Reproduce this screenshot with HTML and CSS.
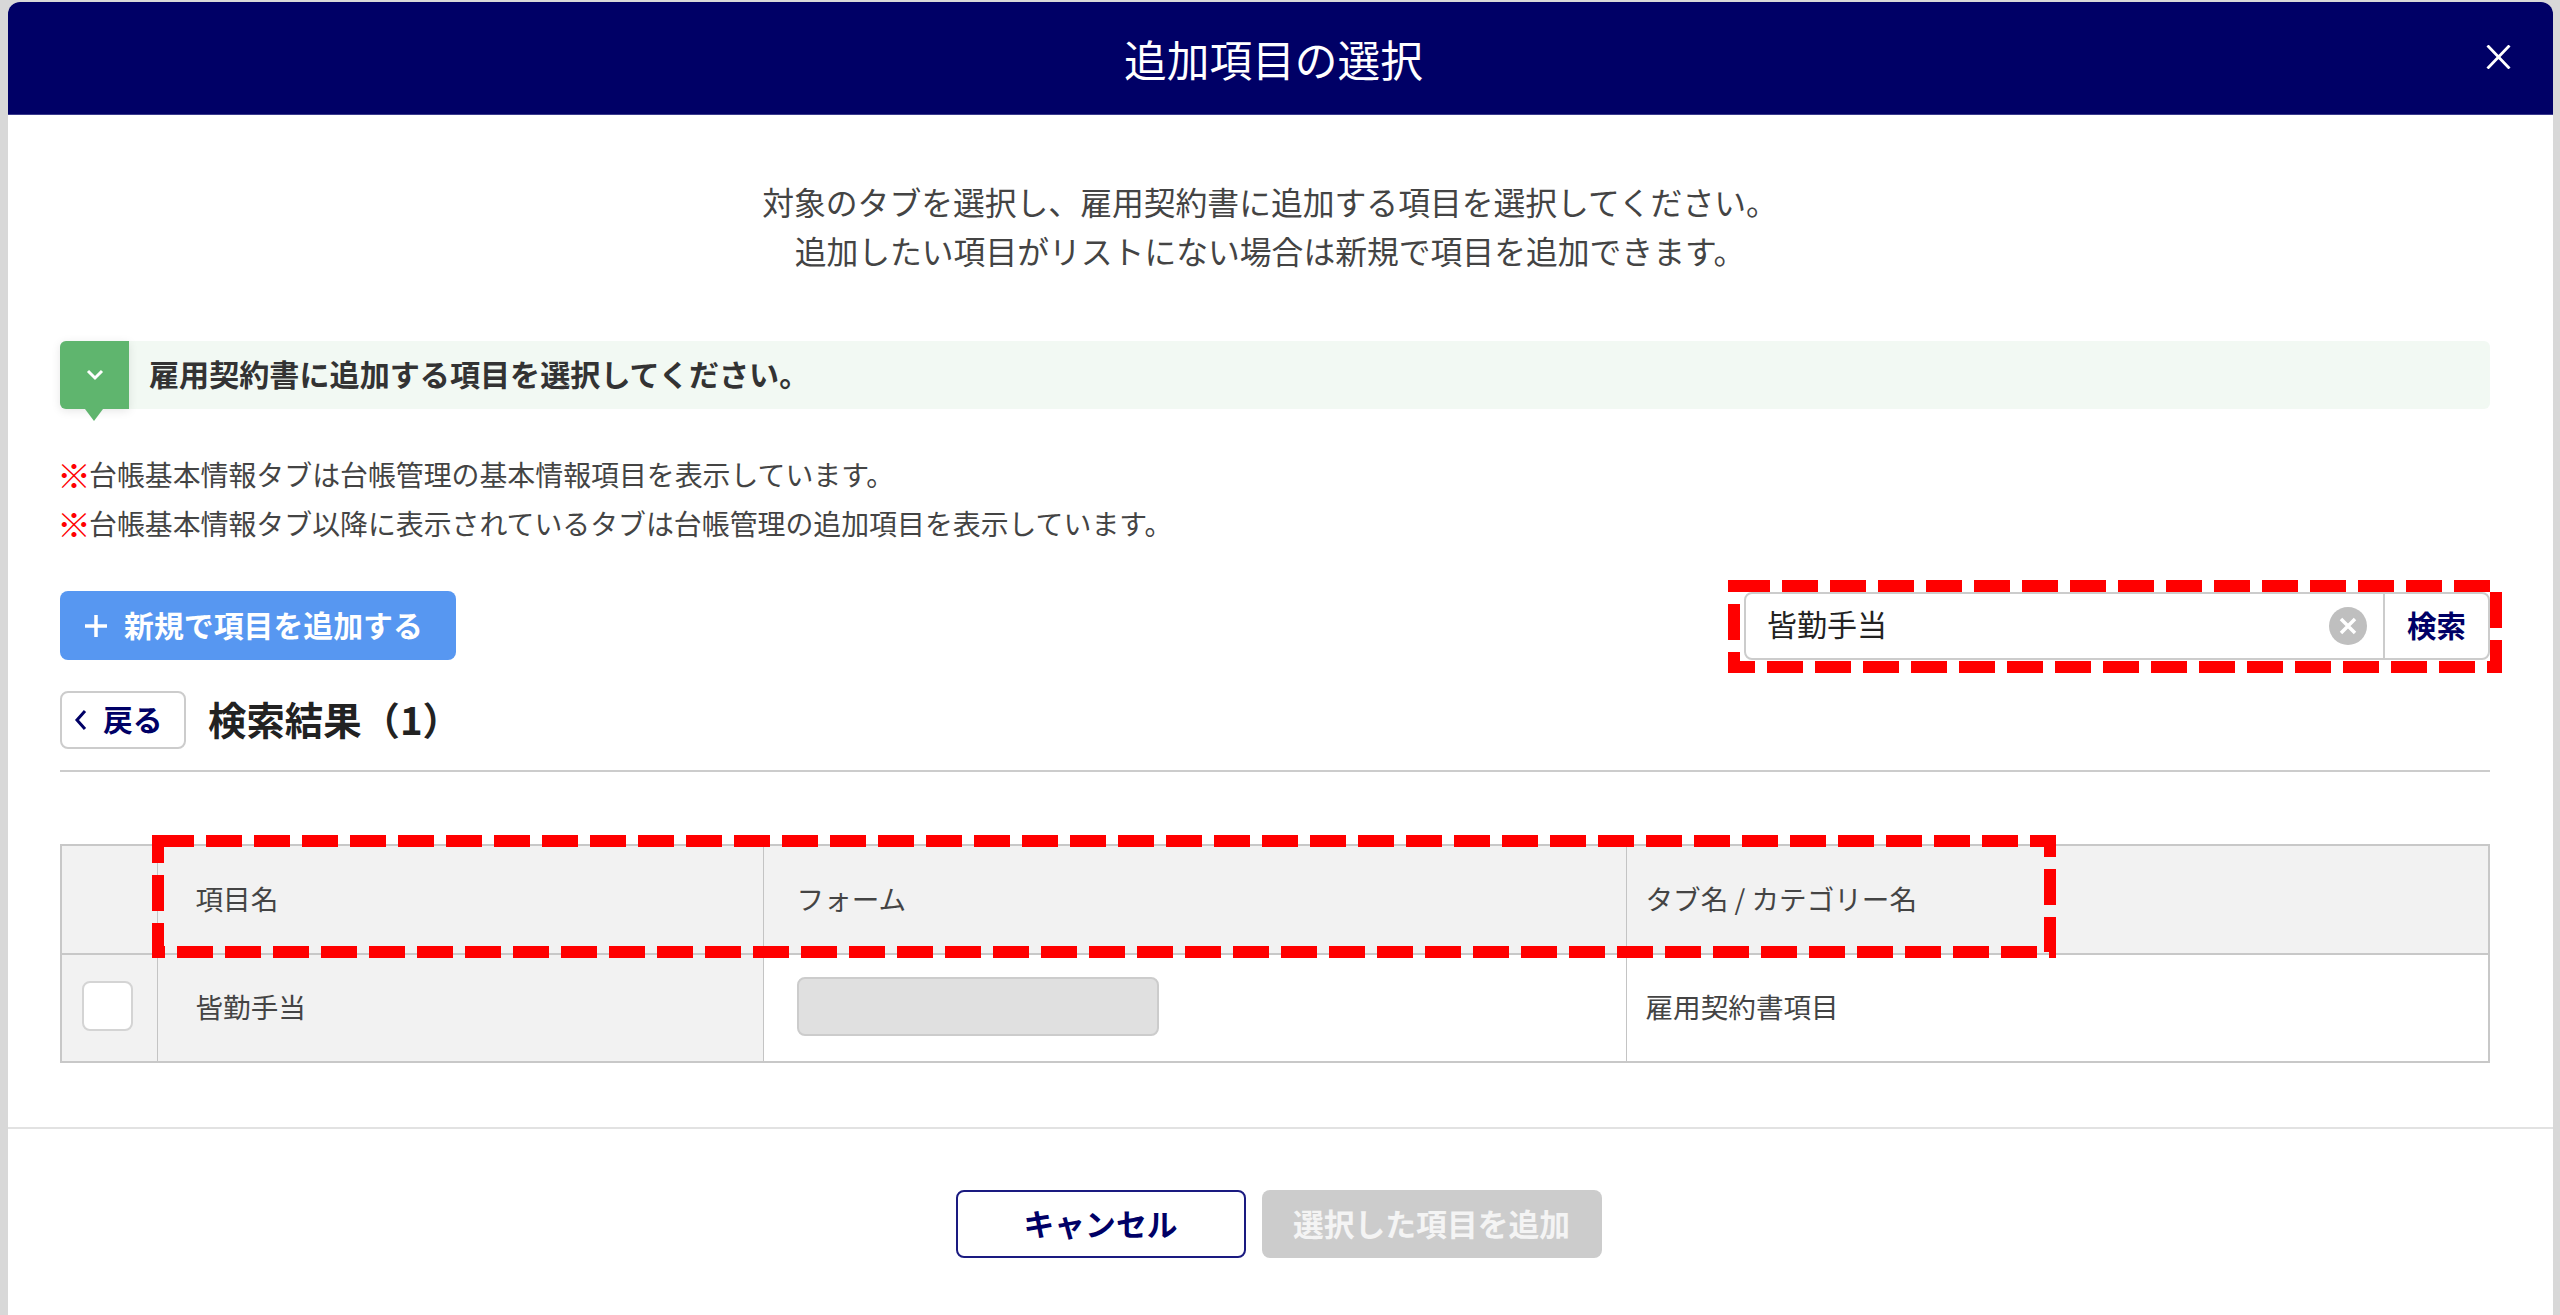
FILE: index.html
```html
<!DOCTYPE html>
<html lang="ja">
<head>
<meta charset="utf-8">
<title>追加項目の選択</title>
<link rel="stylesheet" href="styles.css">
</head>
<body>
<div class="modal">
  <header class="modal-head">
    <h1 class="modal-title">追加項目の選択</h1>
    <svg class="close" width="25" height="24" viewBox="0 0 25 24"><path d="M1.5 0.5 L23.5 23.5 M23.5 0.5 L1.5 23.5" stroke="#fff" stroke-width="2.8" fill="none"/></svg>
  </header>
  <div class="modal-body">
    <p class="intro">対象のタブを選択し、雇用契約書に追加する項目を選択してください。<br>追加したい項目がリストにない場合は新規で項目を追加できます。</p>
    <div class="step">
      <div class="step-tab"><svg width="20" height="14" viewBox="0 0 20 14"><path d="M3 3 L10 10 L17 3" stroke="#fff" stroke-width="3" fill="none"/></svg></div>
      <span class="step-text">雇用契約書に追加する項目を選択してください。</span>
    </div>
    <ul class="notes">
      <li><span class="mark">※</span>台帳基本情報タブは台帳管理の基本情報項目を表示しています。</li>
      <li><span class="mark">※</span>台帳基本情報タブ以降に表示されているタブは台帳管理の追加項目を表示しています。</li>
    </ul>
    <div class="toolbar">
      <button class="btn-new"><svg width="24" height="24" viewBox="0 0 24 24"><path d="M12 1 V23 M1 12 H23" stroke="#fff" stroke-width="3.5" fill="none"/></svg><span class="btn-new-label">新規で項目を追加する</span></button>
      <div class="search">
        <span class="search-value">皆勤手当</span>
        <svg class="search-clear" width="38" height="38" viewBox="0 0 38 38"><circle cx="19" cy="19" r="19" fill="#bfbfbf"/><path d="M12 12 L26 26 M26 12 L12 26" stroke="#fff" stroke-width="3.5" fill="none"/></svg>
        <span class="search-btn"><span class="lift">検索</span></span>
      </div>
    </div>
    <div class="result-head">
      <button class="btn-back"><svg width="14" height="24" viewBox="0 0 14 24"><path d="M11 3 L3 12 L11 21" stroke="#000066" stroke-width="3" fill="none"/></svg><span class="lift">戻る</span></button>
      <h2 class="result-title">検索結果（1）</h2>
    </div>
    <table class="items">
      <colgroup><col class="c1"><col class="c2"><col class="c3"><col class="c4"></colgroup>
      <thead>
        <tr><th></th><th class="pad-name">項目名</th><th class="pad-form">フォーム</th><th class="pad-tab">タブ名 / カテゴリー名</th></tr>
      </thead>
      <tbody>
        <tr>
          <td class="gray"><span class="check"></span></td>
          <td class="gray pad-name">皆勤手当</td>
          <td class="pad-form"><span class="field"></span></td>
          <td class="pad-tab">雇用契約書項目</td>
        </tr>
      </tbody>
    </table>
  </div>
  <footer class="modal-foot">
    <button class="btn-cancel">キャンセル</button>
    <button class="btn-add">選択した項目を追加</button>
  </footer>
</div>
<svg class="annotations" width="2560" height="1315" viewBox="0 0 2560 1315">
  <rect class="dash" x="1734" y="586" width="762" height="81"/>
  <rect class="dash" x="158" y="841" width="1892" height="111"/>
</svg>
</body>
</html>
```

FILE: styles.css
```css
* { box-sizing: border-box; }
html, body { margin: 0; height: 100%; }
body {
  background: #d8d8d8;
  padding: 2px 7px 0 8px;
  font-family: "Noto Sans CJK JP", "Noto Sans", sans-serif;
  color: #333;
  overflow: hidden;
}
button { font-family: inherit; cursor: pointer; }
.lift { padding-bottom: 4px; }
.modal {
  background: #fff;
  height: 1313px;
  border-radius: 12px 12px 0 0;
  overflow: hidden;
}
.modal-head {
  height: 113px;
  background: #000066;
  display: flex;
  align-items: center;
  justify-content: center;
  padding-right: 14px;
  position: relative;
  border-bottom: 1px solid #3a3a8c;
}
.modal-title {
  margin: 0;
  font-size: 42.7px;
  font-weight: 400;
  color: #fff;
}
.close { position: absolute; right: 42px; top: 43px; }
.modal-body { padding: 0 63px 0 52px; }
.intro {
  margin: 62px 0 0;
  padding-right: 10px;
  text-align: center;
  font-size: 31.8px;
  line-height: 49px;
  color: #444;
}
.step {
  margin-top: 66px;
  height: 68px;
  background: #f2f9f3;
  border-radius: 6px;
  display: flex;
  align-items: center;
}
.step-tab {
  width: 69px;
  height: 68px;
  background: #5fb56e;
  border-radius: 6px 0 0 6px;
  display: flex;
  align-items: center;
  justify-content: center;
  position: relative;
  box-shadow: 0 2px 10px rgba(0,0,0,.1);
}
.step-tab::after {
  content: "";
  position: absolute;
  left: 25px;
  top: 68px;
  border-left: 9px solid transparent;
  border-right: 9px solid transparent;
  border-top: 12px solid #5fb56e;
}
.step-text {
  margin-left: 20px;
  padding-bottom: 5px;
  font-size: 30.1px;
  font-weight: 700;
  color: #333;
}
.notes {
  list-style: none;
  margin: 41px 0 0;
  padding: 0 0 1px;
  font-size: 27.9px;
  line-height: 49px;
  color: #444;
}
.mark {
  display: inline-block;
  width: 32px;
  font-size: 34px;
  line-height: 1;
  color: #f00;
  font-weight: 700;
  margin-left: -3px;
  vertical-align: -3px;
}
.toolbar {
  margin-top: 42px;
  display: flex;
  align-items: center;
  justify-content: space-between;
}
.btn-new {
  width: 396px;
  height: 69px;
  border: 0;
  border-radius: 8px;
  background: #5797f1;
  color: #fff;
  font-size: 29.9px;
  font-weight: 700;
  display: flex;
  align-items: center;
  padding: 0 0 0 24px;
  gap: 16px;
}
.btn-new-label { padding-bottom: 3px; }
.search {
  width: 746px;
  height: 68px;
  border: 2px solid #ccc;
  border-radius: 8px;
  display: flex;
  align-items: center;
  background: #fff;
}
.search-value { flex: 1; padding: 0 0 5px 21px; font-size: 30px; color: #222; }
.search-clear { margin-right: 16px; }
.search-btn {
  width: 105px;
  height: 100%;
  border-left: 2px solid #ccc;
  display: flex;
  align-items: center;
  justify-content: center;
  font-size: 29.5px;
  font-weight: 700;
  color: #000066;
}
.result-head {
  margin-top: 31px;
  padding-bottom: 21px;
  border-bottom: 2px solid #ccc;
  display: flex;
  align-items: center;
  gap: 22px;
}
.btn-back {
  width: 126px;
  height: 58px;
  border: 2px solid #ccc;
  border-radius: 8px;
  background: #fff;
  color: #000066;
  font-size: 29.8px;
  font-weight: 700;
  display: flex;
  align-items: center;
  justify-content: flex-start;
  gap: 15px;
  padding: 0 0 0 12px;
}
.result-title {
  margin: 0;
  padding-bottom: 4px;
  font-size: 38.4px;
  line-height: 1.2;
  font-weight: 700;
  color: #222;
}
.items {
  margin-top: 72px;
  width: 2428px;
  border-collapse: collapse;
  table-layout: fixed;
  border: 2px solid #c8c8c8;
}
.c1 { width: 96px; }
.c2 { width: 606px; }
.c3 { width: 863px; }
.c4 { width: 863px; }
.items th, .items td {
  border-left: 1px solid #c4c4c4;
  border-top: 2px solid #c8c8c8;
  font-size: 27.6px;
  font-weight: 400;
  text-align: left;
  padding: 0 0 4px;
  color: #444;
}
.items th { height: 109px; background: #f2f2f2; }
.items td { height: 108px; }
.gray { background: #f2f2f2; }
.pad-name { padding-left: 38px !important; }
.pad-form { padding-left: 33px !important; }
.pad-tab { padding-left: 19px !important; }
.check {
  display: block;
  width: 51px;
  height: 50px;
  margin-left: 20px;
  background: #fff;
  border: 2px solid #d4d4d4;
  border-radius: 8px;
}
.field {
  display: block;
  width: 362px;
  height: 59px;
  background: #e0e0e0;
  border: 2px solid #ccc;
  border-radius: 8px;
}
.modal-foot {
  margin-top: 64px;
  border-top: 2px solid #e2e2e2;
  padding-top: 61px;
  display: flex;
  justify-content: center;
  gap: 16px;
  padding-right: 4px;
}
.btn-cancel, .btn-add {
  height: 68px;
  border-radius: 8px;
  font-size: 30.8px;
  font-weight: 700;
  padding: 0 0 4px;
}
.btn-cancel { width: 290px; background: #fff; border: 2px solid #1a1a80; color: #000066; }
.btn-add { width: 340px; background: #ccc; border: 0; color: #f4f4f4; }
.annotations { position: absolute; left: 0; top: 0; pointer-events: none; }
.dash { fill: none; stroke: #f00; stroke-width: 12; stroke-dasharray: 36 12; }
```
